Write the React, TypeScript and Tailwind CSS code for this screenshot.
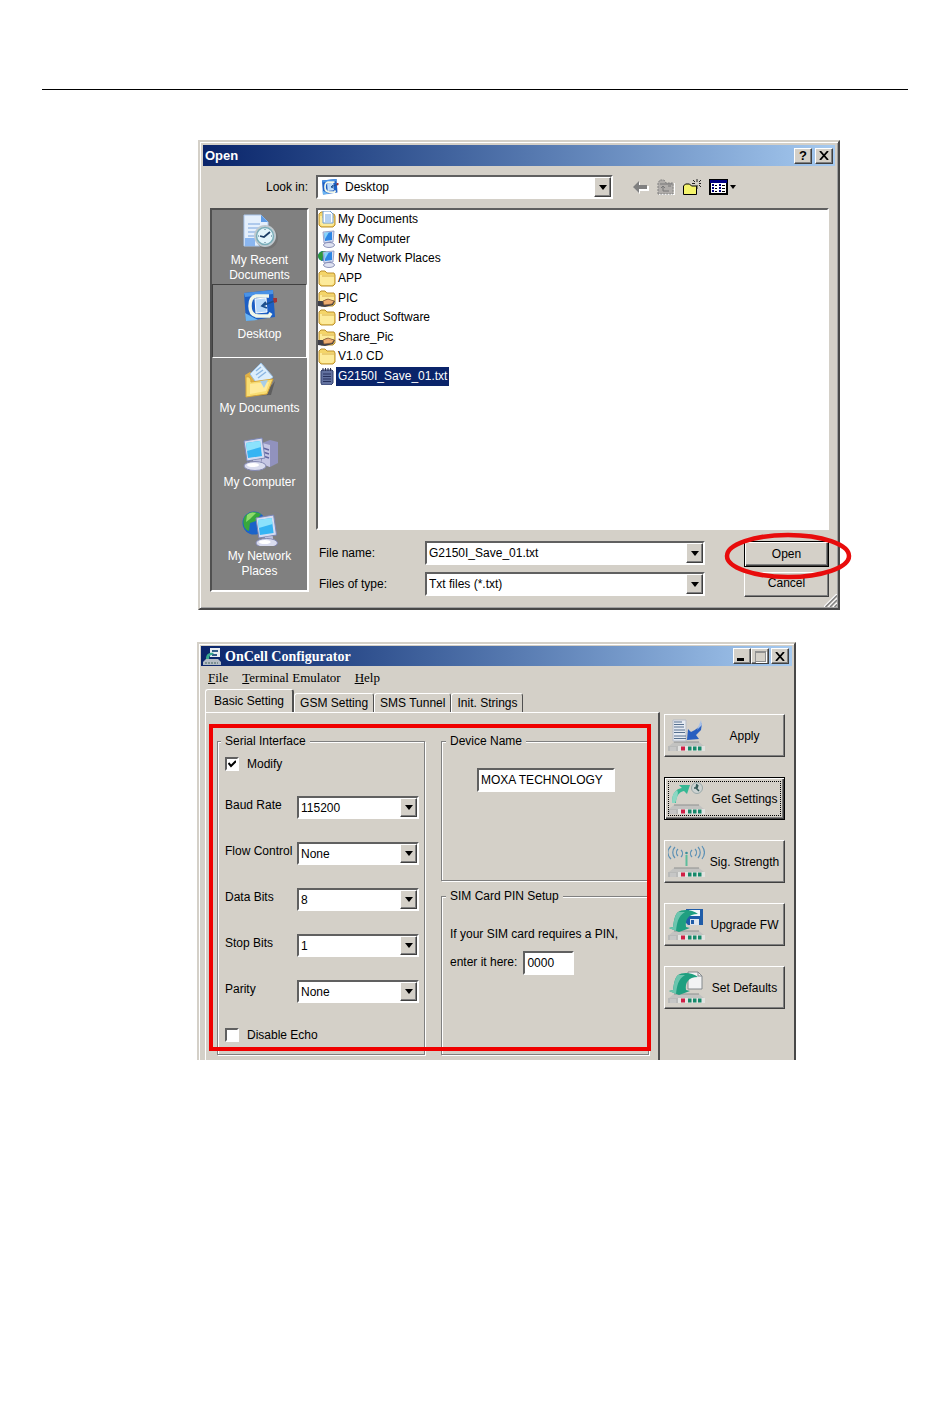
import { useState, type ReactNode } from 'react';

const raised = 'border border-t-white border-l-white border-r-[#404040] border-b-[#404040] bg-[#d4d0c8] shadow-[inset_-1px_-1px_0_#808080]';
const sunken = 'border-2 border-t-[#606060] border-l-[#606060] border-r-white border-b-white bg-white';

function DesktopIcon({ size }: { size: number }) {
  return (
    <svg width={size} height={size} viewBox="0 0 36 36">
      <path d="M2 5 31 2 33 29 4 33Z" fill="#1d5fc4" />
      <path d="M2 5 31 2 31 6 3 9Z" fill="#4a93e6" />
      <path d="M3 25 16 32 4 33Z" fill="#6ab4f2" />
      <path d="M27 8H14c-5 1-6 5-6 10 0 8 4 10 9 10h10l2-3" fill="none" stroke="#f2f7e8" strokeWidth="3.500" />
      <path d="m13 11 11-1 1 14-11 1Z" fill="#b9dafa" stroke="#fff" strokeWidth="1" />
      <path d="m32 13-12 5M24 14l-4 4 5 2" fill="none" stroke="#1c4e8c" strokeWidth="1.800" />
      <path d="m31 10 4 0 0 4-3 1Z" fill="#a33434" />
    </svg>
  );
}

function RecentIcon() {
  return (
    <svg width="36" height="36" viewBox="0 0 36 36">
      <path d="M2 1h17l7 7v24H2Z" fill="#e4effc" stroke="#a9c6ec" />
      <path d="M19 1v7h7Z" fill="#5d9be6" />
      <path d="M6 10h12M6 14h12M6 18h8M6 22h6M6 26h6" stroke="#9cbde6" strokeWidth="1.5" />
      <path d="M3 24h10v8H3Z" fill="#8ab6f0" />
      <circle cx="25" cy="24" r="11" fill="#747474" />
      <circle cx="23" cy="22" r="11" fill="#bfc9cf" />
      <circle cx="23" cy="22" r="8.5" fill="#e3f5fb" stroke="#79adb8" strokeWidth="1.5" />
      <path d="M28 18 22 23l-4-1" fill="none" stroke="#1d3f66" strokeWidth="1.8" />
      <path d="M23 15v1M23 28v1M16 22h1M29 22h1" stroke="#426c84" />
    </svg>
  );
}

function OpenFolderIcon() {
  return (
    <svg width="36" height="36" viewBox="0 0 36 36">
      <path d="m7 34 22-1 4-14-3 4Z" fill="#5e5e5e" />
      <path d="M3 13 8 10l6 3v19l-9 2Z" fill="#e0b044" />
      <path d="m8 12 11-11 12 14-13 11Z" fill="#dceefc" stroke="#9abfe4" />
      <path d="m14 9 5-4M14 13l7-5M16 16l8-6" stroke="#8cb7e2" strokeWidth="1.5" />
      <path d="M4 15c3-1 5 1 5 5l22-3-6 15-21 3Z" fill="#f8dd72" stroke="#d6a63c" />
      <path d="m8 22 19-2-3 9-16 3Z" fill="#ffeb9b" />
      <path d="m18 19 8-1-4 8Z" fill="#a8cde8" />
    </svg>
  );
}

function Monitor() {
  return (
    <>
      <path d="m2 5 18-3 3 20-18 3Z" fill="#d5dcf1" stroke="#7b86b5" />
      <path d="m4 7 14-2 2 15-14 2Z" fill="#35b4f3" />
      <path d="m4 7 14-2 1 6L5 15Z" fill="#8ce2fc" />
      <path d="m11 24 8-1 1 5h-8Z" fill="#bfc3df" />
      <ellipse cx="13" cy="30" rx="11" ry="4.5" fill="#d9dcee" stroke="#8489b3" />
      <ellipse cx="11" cy="29" rx="6" ry="2" fill="#fff" />
    </>
  );
}

function ComputerIcon() {
  return (
    <svg width="36" height="36" viewBox="0 0 36 36">
      <path d="m20 7 8-3 8 2v21l-8 4-9-3Z" fill="#9192be" />
      <path d="m20 7 8 2v22l-8-3Z" fill="#c5c6e4" />
      <path d="m21 12 6 2M21 16l6 2M21 20l6 2" stroke="#6366a1" strokeWidth="1.5" />
      <Monitor />
    </svg>
  );
}

function NetworkIcon() {
  return (
    <svg width="36" height="36" viewBox="0 0 36 36">
      <circle cx="12" cy="13" r="11.5" fill="#1b63c9" />
      <path d="M3 6C8 1 14 1 19 4l-5 7-6 2-1 8C1 19 0 11 3 6Z" fill="#38a83c" />
      <path d="M5 5c3-3 6-3 9-2L8 9 4 12Z" fill="#8edb6b" />
      <g transform="translate(12 3) scale(.98 1)">
        <Monitor />
      </g>
    </svg>
  );
}

function SmallComputerIcon({ globe = false }: { globe?: boolean }) {
  return (
    <svg width="18" height="18" viewBox="0 0 18 18">
      {globe && (
        <>
          <circle cx="5" cy="6" r="5" fill="#2468c4" />
          <path d="M0 5C2 1 6 0 9 2L5 6l-1 5C1 10 0 8 0 5Z" fill="#2f9a3a" />
        </>
      )}
      <path d="m5 2 11-1-1 11-9 1Z" fill="#d7def2" stroke="#8791bd" strokeWidth=".8" />
      <path d="m6 3 8-1v8l-7 1Z" fill="#2e86e4" />
      <path d="m6 3 5-1-4 7Z" fill="#8ad4fa" />
      <path d="m9 12 4-1 1 3H9Z" fill="#a9aed0" />
      <ellipse cx="11" cy="15" rx="5.5" ry="2.5" fill="#dfe2f1" stroke="#777daa" strokeWidth=".8" />
    </svg>
  );
}

function FolderIcon({ kind }: { kind?: 'docs' | 'shared' }) {
  return (
    <svg width="18" height="17" viewBox="0 0 18 17">
      <path d="M1 14V3l2-2h4l2 2h7l1 2v9l-2 2H3Z" fill="#f4d569" stroke="#bd912f" />
      <path d="m2 13 0-8h14v8l-2 2H4Z" fill="#fdeb9b" />
      <path d="M4 6h12" stroke="#d9b04a" />
      {kind === 'docs' && (
        <>
          <path d="M5 0h7l3 3v9H5Z" fill="#fff" stroke="#6a9ad2" />
          <path d="M7 4h6M7 6h6M7 8h6M7 10h6" stroke="#6aa3e3" />
        </>
      )}
      {kind === 'shared' && (
        <>
          <path d="M0 11h5l4-2 8 2-2 4-8 2-7-1Z" fill="#3f3f49" />
          <path d="m5 11 5-2 6 2-2 3-8 1Z" fill="#eeae72" stroke="#8a5c34" strokeWidth=".7" />
        </>
      )}
    </svg>
  );
}

function TextFileIcon() {
  return (
    <svg width="18" height="17" viewBox="0 0 18 17">
      <path d="M4 2h10l1 1v12l-2 2H4l-1-2V3Z" fill="#62719f" stroke="#33406d" />
      <path d="M5 0v3M7.500 0v3M10 0v3M12.500 0v3" stroke="#2b3152" />
      <path d="M5 6h8M5 8.500h8M5 11h8M5 13.500h8" stroke="#26315d" />
    </svg>
  );
}

function Arrow() {
  return (
    <span className={`pointer-events-none absolute inset-y-[2px] right-[2px] flex w-[17px] items-center justify-center ${raised}`}>
      <svg width="8" height="5" viewBox="0 0 8 5"><path d="M0 0h8L4 5Z" fill="#000" /></svg>
    </span>
  );
}

interface DropDownProps {
  id: string;
  value: string;
  icon?: ReactNode;
  className?: string;
}

function DropDown({ id, value, icon, className = '' }: DropDownProps) {
  return (
    <div className={`relative ${className}`}>
      <select id={id} className={`block h-full w-full appearance-none outline-none ${icon ? 'pl-[27px]' : 'pl-[2px]'} ${sunken}`}>
        <option>{value}</option>
      </select>
      {icon && <span className="pointer-events-none absolute top-[3px] left-[5px]">{icon}</span>}
      <Arrow />
    </div>
  );
}

function CaptionButton({ label, children }: { label: string; children: ReactNode }) {
  return (
    <button type="button" aria-label={label} className={`flex h-4 w-[18px] items-center justify-center ${raised}`}>
      {children}
    </button>
  );
}

function CloseGlyph() {
  return (
    <svg width="10" height="9" viewBox="0 0 10 9"><path d="m1 0 8 9M9 0 1 9" stroke="#000" strokeWidth="1.8" /></svg>
  );
}

const places = [
  { name: 'My Recent Documents', icon: <RecentIcon /> },
  { name: 'Desktop', icon: <DesktopIcon size={36} /> },
  { name: 'My Documents', icon: <OpenFolderIcon /> },
  { name: 'My Computer', icon: <ComputerIcon /> },
  { name: 'My Network Places', icon: <NetworkIcon /> },
];

const files = [
  { name: 'My Documents', icon: <FolderIcon kind="docs" /> },
  { name: 'My Computer', icon: <SmallComputerIcon /> },
  { name: 'My Network Places', icon: <SmallComputerIcon globe /> },
  { name: 'APP', icon: <FolderIcon /> },
  { name: 'PIC', icon: <FolderIcon kind="shared" /> },
  { name: 'Product Software', icon: <FolderIcon /> },
  { name: 'Share_Pic', icon: <FolderIcon kind="shared" /> },
  { name: 'V1.0 CD', icon: <FolderIcon /> },
  { name: 'G2150I_Save_01.txt', icon: <TextFileIcon /> },
];

function Toolbar() {
  return (
    <div className="flex w-[216px] items-center gap-2 pl-5">
      <button type="button" aria-label="Back">
        <svg width="16" height="14" viewBox="0 0 16 14">
          <path d="M1 8 7 2v4h9v5H7v3Z" fill="#fff" />
          <path d="m0 7 6-6v4h8v4H6v4Z" fill="#808080" />
        </svg>
      </button>
      <button type="button" aria-label="Up one level">
        <svg width="18" height="16" viewBox="0 0 18 16">
          <path d="M2 16h16V4" fill="none" stroke="#fff" strokeWidth="2" />
          <path d="M1 15V4l2-3h4l2 3h7v11Z" fill="#b0adaa" stroke="#808080" strokeDasharray="2 1" />
          <path d="M6 12V7M4 9l2-2 2 2M6 12h6M3 5h12M11 7h3" fill="none" stroke="#777" />
        </svg>
      </button>
      <button type="button" aria-label="Create new folder">
        <svg width="18" height="17" viewBox="0 0 18 17">
          <path d="M.5 15.500V7l2-2h4l2 2h5v8.500Z" fill="#f4f36c" stroke="#000" />
          <path d="M14 0v3M14 6v4M9 4.500h3M16 4.500h2M10 1l2 2M16 6l2 2M18 1l-2 2" stroke="#222" />
        </svg>
      </button>
      <button type="button" aria-label="View menu" className="flex items-center gap-[2px]">
        <svg width="19" height="16" viewBox="0 0 19 16">
          <path d="M1 1h17v14H1Z" fill="#fff" stroke="#000" strokeWidth="2" />
          <path d="M1 1h17v3H1Z" fill="#000080" />
          <path d="M3 5h2v2H3zM10 5h2v2h-2zM3 8h2v2H3zM10 8h2v2h-2zM3 11h2v2H3zM10 11h2v2h-2z" fill="#000080" />
          <path d="M6 6.500h2M13 6.500h3M6 9.500h2M13 9.500h3M6 12.500h2M13 12.500h3" stroke="#000" />
        </svg>
        <svg width="6" height="4" viewBox="0 0 6 4"><path d="M0 0h6L3 4Z" fill="#000" /></svg>
      </button>
    </div>
  );
}

function OpenDialog() {
  return (
    <section className="mt-[50px] mr-[110px] ml-[198px] border-2 border-t-[#d4d0c8] border-r-[#484848] border-b-[#484848] border-l-[#d4d0c8] bg-[#d4d0c8] p-[3px] shadow-[inset_1px_1px_0_#fff,inset_-1px_-1px_0_#a0a0a0]">
      <header className="flex h-[21px] items-center gap-[3px] bg-linear-to-r from-[#0a246a] to-[#a6caf0] pr-[2px] pl-[2px]">
        <h2 className="flex-1 text-[13px] font-bold text-white">Open</h2>
        <CaptionButton label="Help"><span className="text-[13px] leading-3 font-bold">?</span></CaptionButton>
        <CaptionButton label="Close"><CloseGlyph /></CaptionButton>
      </header>

      <div className="mt-[9px] flex h-6 pr-[6px] pl-[7px]">
        <label htmlFor="look-in" className="mr-[7px] w-[99px] pr-px text-right leading-6">Look in:</label>
        <DropDown id="look-in" value="Desktop" icon={<DesktopIcon size={18} />} className="flex-1" />
        <Toolbar />
      </div>

      <div className="mt-[9px] flex items-start gap-[7px] pr-[6px] pb-[9px] pl-[7px]">
        <nav className="h-[384px] w-[99px] border-2 border-t-[#505050] border-r-white border-b-white border-l-[#505050] bg-[#808080] text-center leading-[15px] text-white">
          {places.map((place) => (
            <button
              key={place.name}
              type="button"
              className={`flex h-[74px] w-full flex-col items-center gap-[3px] border px-[9px] pt-[3px] ${place.name === 'Desktop' ? 'border-t-[#404040] border-r-white border-b-white border-l-[#404040] bg-[#868686]' : 'border-transparent'}`}
            >
              <span className="h-9 shrink-0">{place.icon}</span>
              <span className="-mx-1">{place.name}</span>
            </button>
          ))}
        </nav>

        <div className="flex-1">
          <div className={`h-[322px] ${sunken}`}>
            <ul className="flex h-[176px] flex-col justify-between">
              {files.map((file) => (
                <li key={file.name} className="flex h-[19px] items-center">
                  <span className="flex w-[18px] items-center">{file.icon}</span>
                  <span className={`px-[2px] leading-[19px] ${file.name.startsWith('G2150I') ? 'bg-[#0a246a] text-white' : ''}`}>{file.name}</span>
                </li>
              ))}
            </ul>
          </div>
          <div className="mt-[11px] grid grid-cols-[106px_1fr_85px] grid-rows-[24px_24px] gap-y-[7px] pl-[3px]">
            <label htmlFor="file-name" className="leading-6">File name:</label>
            <DropDown id="file-name" value="G2150I_Save_01.txt" className="mr-[39px]" />
            <div className="relative">
              <button type="button" className="h-[26px] w-full border border-black bg-[#d4d0c8] shadow-[inset_1px_1px_0_#fff,inset_-1px_-1px_0_#404040,inset_-2px_-2px_0_#808080]">Open</button>
              <svg className="pointer-events-none absolute -top-[9px] -left-[20px] z-10" width="128" height="48">
                <ellipse cx="64" cy="24" rx="61" ry="21" fill="none" stroke="#e80c0c" strokeWidth="4.500" />
              </svg>
            </div>
            <label htmlFor="file-type" className="leading-6">Files of type:</label>
            <DropDown id="file-type" value="Txt files (*.txt)" className="mr-[39px]" />
            <div className="relative">
              <button type="button" className={`h-[25px] w-full pb-[3px] ${raised}`}>Cancel</button>
              <svg className="absolute -right-[8px] -bottom-[11px]" width="13" height="13" viewBox="0 0 13 13">
                <path d="M0 13 13 0M4.500 13 13 4.500M9 13l4-4" stroke="#fff" strokeWidth="1.500" />
                <path d="M1.500 13 13 1.500M6 13l7-7M10.500 13l2.500-2.500" stroke="#808080" strokeWidth="1.500" />
              </svg>
            </div>
          </div>
        </div>
      </div>
    </section>
  );
}

// The small modem every command icon stands on
function Modem() {
  return (
    <>
      <path d="M6 23h25l5 4H1Z" fill="#c3c3c1" />
      <path d="M6 23h25" stroke="#8f9190" />
      <path d="M1 27h36v5H0Z" fill="#e2e3e1" />
      <path d="M0 27h10v5H0Z" fill="#b9bab9" />
      <path d="M2 29h6M2 31h6" stroke="#d9dad9" strokeWidth=".8" />
      <path d="M13 27.500h4v4h-4Z" fill="#d01f45" />
      <path d="M20 27.500h3.500v4H20zM25 27.500h3.500v4H25zM30 27.500h3.500v4H30z" fill="#16896a" />
    </>
  );
}

// Broad arrow that pours down onto the modem
function PourArrow() {
  return (
    <>
      <path d="M30 6C24 1 14 1 10 4 6 8 6 14 5 19l-4 1 10 4 11-4-4-1c-1-7 2-13 12-13Z" fill="#1f9f80" />
      <path d="M10 4c-4 4-4 10-5 15l-4 1 7 3C9 15 10 8 17 4Z" fill="#6cc5ae" />
    </>
  );
}

function CommandIcon({ children }: { children: ReactNode }) {
  return (
    <svg width="37" height="33" viewBox="0 0 37 33" className="shrink-0">
      <Modem />
      {children}
    </svg>
  );
}

const commands = [
  {
    name: 'Apply',
    icon: (
      <CommandIcon>
        <path d="M5 1h13v21H5Z" fill="#e6ebf2" stroke="#b7bcc6" />
        <path d="M6 3h8M6 5.500h10M6 8h10M6 11h11M6 13.500h11M6 17h12M6 19.500h12" stroke="#56708f" strokeWidth="1.200" />
        <path d="m34 4-1 7-5 5 3 4-12 1 1-11 3 3c5-2 8-5 11-9Z" fill="#285fc0" />
        <path d="m33 1 1 5-5 5Z" fill="#a9c1e6" />
      </CommandIcon>
    ),
  },
  {
    name: 'Get Settings',
    icon: (
      <CommandIcon>
        <path d="M4 21C4 11 8 7 14 6l-3-3 11 0-3 9-3-3c-5 1-8 5-8 12Z" fill="#36b894" />
        <path d="M4 21c0-7 1-10 5-13 2 3 0 8-2 13Z" fill="#8dd7c3" />
        <circle cx="29" cy="6" r="5.500" fill="#cdd3d2" stroke="#9aa9a9" />
        <path d="m29 2-1 4 3 3M26 6h3l1-3" fill="none" stroke="#345958" strokeWidth="1.500" />
      </CommandIcon>
    ),
  },
  {
    name: 'Sig. Strength',
    icon: (
      <CommandIcon>
        <path d="M17.500 10h2v11h-2Z" fill="#5cbd9c" />
        <circle cx="18.500" cy="8" r="1.300" fill="#3a8f9a" />
        <path d="M13 5c2 2 2 5 0 7M7 2c-3 3-3 8 0 11M3 1c-4 4-4 9 0 13M10 4c-2 2-2 5 0 7M24 5c-2 2-2 5 0 7M27 4c2 2 2 5 0 7M30 2c3 3 3 8 0 11M34 1c3 4 3 9 0 13" fill="none" stroke="#5d91b5" strokeWidth="1.200" />
      </CommandIcon>
    ),
  },
  {
    name: 'Upgrade FW',
    icon: (
      <CommandIcon>
        <path d="M18 1h17v16H20l-2-2Z" fill="#1f5ca8" />
        <path d="M21 2h11v6H21Z" fill="#f4f7fa" />
        <path d="M22 11h9v6h-9Z" fill="#dfe6ee" />
        <path d="M23 12h3v4h-3Z" fill="#1f5ca8" />
        <PourArrow />
      </CommandIcon>
    ),
  },
  {
    name: 'Set Defaults',
    icon: (
      <CommandIcon>
        <path d="M20 1h10l4 4v13H20Z" fill="#f2f3f4" stroke="#84898d" />
        <path d="M30 1v4h4" fill="none" stroke="#84898d" />
        <PourArrow />
      </CommandIcon>
    ),
  },
];

const serialFields = [
  { id: 'baud-rate', label: 'Baud Rate', value: '115200' },
  { id: 'flow-control', label: 'Flow Control', value: 'None' },
  { id: 'data-bits', label: 'Data Bits', value: '8' },
  { id: 'stop-bits', label: 'Stop Bits', value: '1' },
  { id: 'parity', label: 'Parity', value: 'None' },
];

function Group({ title, className = '', children }: { title: string; className?: string; children: ReactNode }) {
  return (
    <fieldset className={`min-w-0 border border-[#808080] shadow-[1px_1px_0_#fff,inset_1px_1px_0_#fff] ${className}`}>
      <legend className="-ml-1 bg-[#d4d0c8] px-1 leading-4">{title}</legend>
      {children}
    </fieldset>
  );
}

function CheckBox({ id, label, defaultChecked = false }: { id: string; label: string; defaultChecked?: boolean }) {
  const [checked, setChecked] = useState(defaultChecked);
  return (
    <div className="flex h-4 items-center">
      <span className="relative mr-2 h-[14px] w-[14px]">
        <input
          id={id}
          type="checkbox"
          checked={checked}
          onChange={(e) => setChecked(e.target.checked)}
          className={`block h-[14px] w-[14px] appearance-none ${sunken}`}
        />
        {checked && (
          <svg className="pointer-events-none absolute top-[3px] left-[3px]" width="8" height="8" viewBox="0 0 8 8">
            <path d="m.5 3 2.500 3 5-5" fill="none" stroke="#000" strokeWidth="2" />
          </svg>
        )}
      </span>
      <label htmlFor={id}>{label}</label>
    </div>
  );
}

const tabs = ['Basic Setting', 'GSM Setting', 'SMS Tunnel', 'Init. Strings'];

function SettingsPanel() {
  return (
    <div className="relative grid grid-cols-2 gap-4 border-t border-r-2 border-l border-t-white border-r-[#505050] border-l-white pt-5 pr-[9px] pb-[5px] pl-[11px]">
      <Group title="Serial Interface" className="pr-[5px] pb-[11px] pl-[7px]">
        <div className="pt-[7px]">
          <CheckBox id="modify" label="Modify" defaultChecked />
        </div>
        <div className="my-6 flex flex-col gap-[23px]">
          {serialFields.map((field) => (
            <div key={field.id} className="flex h-[23px]">
              <label htmlFor={field.id} className="w-[72px] leading-[18px] whitespace-nowrap">{field.label}</label>
              <DropDown id={field.id} value={field.value} className="flex-1" />
            </div>
          ))}
        </div>
        <CheckBox id="disable-echo" label="Disable Echo" />
      </Group>

      <div className="flex flex-col gap-[7px]">
        <Group title="Device Name" className="h-[148px] px-2">
          <input aria-label="Device Name" defaultValue="MOXA TECHNOLOGY" className={`mt-[19px] ml-[27px] block h-6 w-[138px] px-[2px] ${sunken}`} />
        </Group>
        <Group title="SIM Card PIN Setup" className="flex-1 px-2">
          <label htmlFor="pin" className="mt-[22px] block leading-4 whitespace-nowrap">If your SIM card requires a PIN,</label>
          <div className="mt-[9px] flex items-start gap-[6px]">
            <label htmlFor="pin" className="leading-[22px]">enter it here:</label>
            <input id="pin" defaultValue="0000" className={`h-6 w-[51px] px-[2px] ${sunken}`} />
          </div>
        </Group>
      </div>

      <div className="pointer-events-none absolute top-[11px] right-[7px] bottom-[9px] left-[3px] border-4 border-[#f00000]" />
    </div>
  );
}

function Configurator() {
  return (
    <section className="mt-8 mr-[154px] ml-[197px] border-2 border-b-0 border-t-[#d4d0c8] border-r-[#484848] border-l-[#d4d0c8] bg-[#d4d0c8] px-[2px] pt-[2px] shadow-[inset_1px_1px_0_#fff]">
      <header className="flex h-5 items-center bg-linear-to-r from-[#0a246a] to-[#a6caf0] pr-[3px] pl-[2px]">
        <svg width="18" height="17" viewBox="0 0 18 17">
          <path d="M7 0h10v9H7Z" fill="#e9edf2" />
          <path d="M9 2h6v2H9zM9 6h5v2H9z" fill="#315c88" />
          <path d="M3 11C3 6 6 4 11 5l-2 2C7 7 6 8 6 11Z" fill="#38a98f" />
          <path d="M3 11h12l3 3v3H0v-3Z" fill="#b4bcc4" />
          <path d="M2 15h13" stroke="#45655f" strokeDasharray="2 1" />
        </svg>
        <h2 className="flex-1 pl-1 font-['Liberation_Serif',serif] text-[14px] font-bold text-white">OnCell Configurator</h2>
        <CaptionButton label="Minimize"><span className="mt-[7px] mr-1 h-[3px] w-[7px] bg-black" /></CaptionButton>
        <CaptionButton label="Maximize"><span className="h-[11px] w-[11px] border border-t-2 border-[#909090] shadow-[1px_1px_0_#fff]" /></CaptionButton>
        <span className="w-[2px]" />
        <CaptionButton label="Close"><CloseGlyph /></CaptionButton>
      </header>

      <nav className="flex h-[23px] items-center gap-[14px] pl-[7px] font-['Liberation_Serif',serif] text-[13px]">
        <button type="button"><u>F</u>ile</button>
        <button type="button"><u>T</u>erminal Emulator</button>
        <button type="button"><u>H</u>elp</button>
      </nav>

      <div className="flex pl-1">
        <div className="flex-1">
          <div role="tablist" className="flex h-[23px] items-end">
            {tabs.map((tab, idx) => (
              <button
                key={tab}
                type="button"
                role="tab"
                aria-selected={idx === 0}
                className={`rounded-t-[3px] border-t border-l border-t-white border-l-white border-r-[#505050] ${idx === 0 ? 'h-[23px] border-r-2 px-2' : 'h-[19px] border-r px-[5px]'}`}
              >
                {tab}
              </button>
            ))}
          </div>
          <SettingsPanel />
        </div>

        <div className="flex w-[132px] flex-col gap-5 pt-[25px] pr-[7px] pl-1">
          {commands.map((command) => (
            <button
              key={command.name}
              type="button"
              className={`relative flex h-[43px] items-center pl-[3px] whitespace-nowrap ${command.name === 'Get Settings' ? 'border border-black bg-[#d4d0c8] shadow-[inset_1px_1px_0_#fff,inset_-1px_-1px_0_#404040,inset_-2px_-2px_0_#808080]' : raised}`}
            >
              {command.icon}
              <span className="flex-1 text-center">{command.name}</span>
              {command.name === 'Get Settings' && <span className="absolute inset-[3px] border border-dotted border-black" />}
            </button>
          ))}
        </div>
      </div>
    </section>
  );
}

export default function App() {
  return (
    <main className="min-h-screen bg-white pt-[89px] font-['Liberation_Sans',Arial,sans-serif] text-[12px] text-black">
      <hr className="mx-[42px] border-t border-black" />
      <OpenDialog />
      <Configurator />
    </main>
  );
}
